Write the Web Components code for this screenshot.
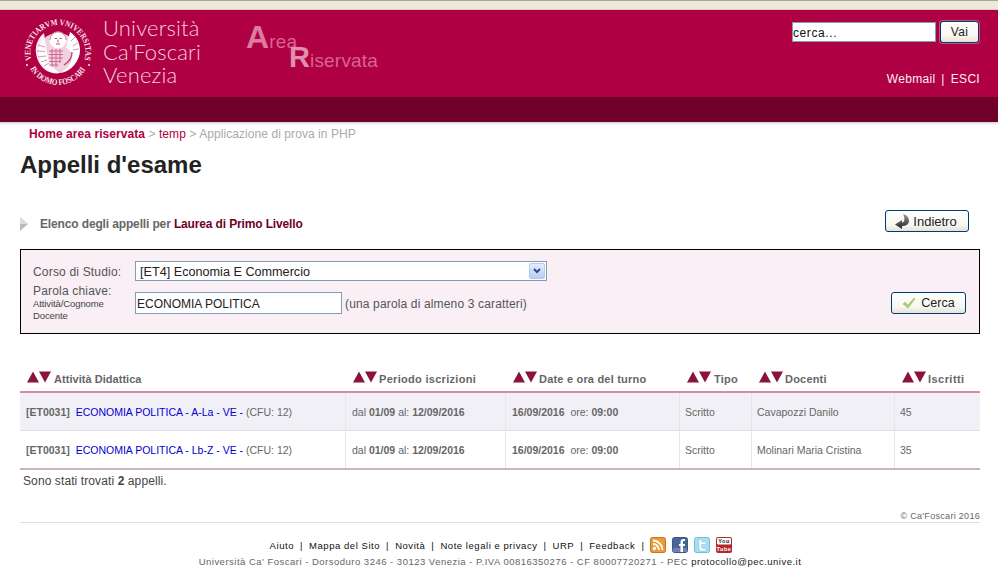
<!DOCTYPE html>
<html lang="it"><head><meta charset="utf-8"><title>Appelli d'esame</title>
<style>
html,body{margin:0;padding:0;background:#fff;font-family:"Liberation Sans",Arial,sans-serif;color:#666;overflow:hidden}
app-page{display:block;width:998px;height:578px}
</style></head><body>
<app-page>
  <cf-header></cf-header>
  <cf-main>
    <cf-crumbs></cf-crumbs>
    <cf-title>Appelli d'esame</cf-title>
    <cf-subhead></cf-subhead>
    <cf-filter></cf-filter>
    <cf-table></cf-table>
    <cf-result></cf-result>
    <cf-footer></cf-footer>
  </cf-main>
</app-page>
<script>
const FONT='"Liberation Sans",Arial,sans-serif';
function def(name,html,init){
  customElements.define(name,class extends HTMLElement{
    constructor(){super();this.attachShadow({mode:'open'}).innerHTML=typeof html==='function'?html(this):html;}
    connectedCallback(){init&&init(this);}
  });
}
const BTN=`display:inline-flex;align-items:center;justify-content:center;box-sizing:border-box;border:1px solid #003c74;border-radius:3px;background:linear-gradient(#fff,#f7f6f0 70%,#e4e2d8);color:#222;font:12px ${FONT};`;

def('app-page',`<style>:host{display:block}</style><slot></slot>`);
def('cf-main',`<style>:host{display:block;padding:0 18px 0 20px}</style><slot></slot>`);

def('cf-logo',`<style>:host{display:block;width:75px;height:75px;flex:none}svg{display:block}
text{font-family:"Liberation Serif",serif;fill:#fbe3ec;font-weight:bold}</style>
<svg width="75" height="75" viewBox="0 0 75 75">
<defs>
<path id="t2" d="M11.500 45 A27.500 27.500 0 1 1 64.500 45"/>
<path id="b" d="M10 53.500 A32 32 0 0 0 66 53.500"/>
</defs>
<text font-size="8.600"><textPath href="#t2" textLength="101" lengthAdjust="spacingAndGlyphs">VENETIARVM VNIVERSITAS</textPath></text>
<text font-size="8.600"><textPath href="#b" textLength="67" lengthAdjust="spacingAndGlyphs">IN DOMO FOSCARI</textPath></text>
<!-- winged lion -->
<circle cx="38" cy="38" r="20" fill="#fff" opacity=".82"/>
<path d="M24 18c-6 5-9 12-8 20 1 8 5 14 11 18 4 2 9 3 13 2-7-4-12-11-13-20-1-7-2-14-3-20z" fill="#fff" opacity=".92"/>
<path d="M50 17c6 4 10 10 10 18 0 11-8 20-19 23 7-5 11-11 11-16 0-5-3-8-6-9z" fill="#fff"/>
<circle cx="38" cy="25" r="8.500" fill="#fff"/>
<path d="M30 25c0-5 4-8 8-8s8 3 8 8" stroke="#c9537f" stroke-width=".8" fill="none"/>
<path d="M34.500 23.500h2.500M39.500 23.500h2.500M36 29h4M38 24.500v3" stroke="#b63a68" stroke-width=".9" fill="none"/>
<g stroke="#c04474" stroke-width="1" opacity=".75">
<path d="M29 36h14M29 39.500h14M29 43h14M29 46.500h12M29 50h9M32 34v18M36 34v18M40 34v14"/>
</g>
<path d="M18 30l7 2M17 36l8 .500M18 42l8-1M21 47l6-2M24 51l5-3M55 22l-4 4M58 28l-5 3M59 34l-6 1" stroke="#c04474" stroke-width=".8" opacity=".7"/>
<path d="M44 50c5-3 8-7 8-13" stroke="#c04474" stroke-width="1.400" fill="none"/>
<circle cx="7" cy="50" r="1" fill="#fbe3ec"/><circle cx="69" cy="50" r="1" fill="#fbe3ec"/>
</svg>`);

def('cf-header',`<style>
:host{display:block;height:125px;font-family:${FONT}}
.strip{height:10px;box-sizing:border-box;background:#ece9d8;border-top:1px solid #aca899;border-bottom:1px solid #d6d2c2}
.red{height:87px;box-sizing:border-box;background:#ae0042;display:flex;padding:5px 19px 0 20px}
.word{margin-left:8px;padding-top:1px;font:300 22px/23.500px Lato,sans-serif;color:#f6cfdd;letter-spacing:.15px}
.area{margin-left:45px;padding-top:10px;color:#d9648f;font-family:"Liberation Sans",sans-serif;font-size:19px;letter-spacing:.2px}
.area b{font-size:32px;line-height:24px;letter-spacing:0;color:#dc7aa0}
.a1,.a2{display:block;height:20px;line-height:24px;white-space:nowrap}
.a2{margin-left:43px}
.a2 b{font-size:29px;color:#e08fae}
.right{margin-left:auto;display:flex;flex-direction:column;align-items:flex-end;padding-top:6px}
.search{display:flex;gap:4px;align-items:center}
.in{box-sizing:border-box;width:144px;height:20px;background:#fff;border:1px solid #7f9db9;color:#111;font:12px/18px ${FONT};letter-spacing:.6px;padding-top:1px}
.btn{${BTN}width:39px;height:22px;letter-spacing:.4px;box-shadow:0 0 0 1px #c9517f}
.links{margin:28px -1px 0 0;display:flex;gap:6px;color:#fdeef3;font-size:12px;line-height:16px;letter-spacing:.3px;white-space:pre}
.dark{height:25px;background:#6f0029}
.shadow{height:3px;background:linear-gradient(#cfcfcf,#fff)}
</style>
<div class="strip"></div>
<div class="red">
  <cf-logo></cf-logo>
  <div class="word">Università<br>Ca'Foscari<br>Venezia</div>
  <div class="area"><span class="a1"><b>A</b>rea</span><span class="a2"><b>R</b>iservata</span></div>
  <div class="right">
    <div class="search"><div class="in">cerca...</div><div class="btn">Vai</div></div>
    <div class="links"><span>Webmail</span><span>|</span><span>ESCI</span></div>
  </div>
</div>
<div class="dark"></div><div class="shadow"></div>`);

def('cf-crumbs',`<style>:host{display:block;padding-left:9px;font:12px/16px ${FONT};color:#aaa;height:16px;padding-top:1px;letter-spacing:.07px}
b{color:#ae0042}span{color:#ae0042}</style><b>Home area riservata</b> &gt; <span>temp</span> &gt; Applicazione di prova in PHP`);

def('cf-title',`<style>:host{display:block;margin-top:8px;font:bold 24px/30px ${FONT};color:#222}</style><slot></slot>`);

def('cf-subhead',`<style>:host{display:flex;align-items:center;height:24px;margin-top:32px;font:bold 12px ${FONT};color:#666;letter-spacing:-.14px}
svg{display:block;margin-right:12px}
i{font-style:normal;color:#6f0029}
.btn{${BTN}width:84px;height:22px;margin:-6px 11px 0 auto;font-size:13px;gap:3px;padding-right:3px;font-weight:normal;letter-spacing:0}</style>
<svg width="8" height="14" viewBox="0 0 8 14"><path d="M0 0l8 7-8 7z" fill="#bbb"/><path d="M0 0l8 7H0z" fill="#ddd"/></svg>
<span>Elenco degli appelli per <i>Laurea di Primo Livello</i></span>
<div class="btn"><svg style="margin:0" width="16" height="17" viewBox="0 0 16 17"><defs><linearGradient id="g" x1="0" y1="0" x2="0" y2="1"><stop offset="0" stop-color="#999"/><stop offset="1" stop-color="#222"/></linearGradient></defs><path d="M9 1c4 1 6 4 6 7s-3 5-7 5v3L1 11.500 8 7v2.500c3 0 3-5 1-8.500z" fill="url(#g)"/></svg>Indietro</div>`);

def('cf-filter',`<style>:host{display:block;box-sizing:border-box;width:960px;height:85px;margin-top:13px;border:1px solid #000;background:#f9eff5;font:12px ${FONT};color:#555;letter-spacing:.18px}
.g{display:grid;grid-template-columns:102px auto 1fr;padding:11px 13px 0 12px;align-items:center}
.l{line-height:14px}
.l1{padding-top:2px}
small{display:block;font-size:9.500px;letter-spacing:-.1px;line-height:12px;color:#444}
.sel{box-sizing:border-box;width:412px;height:20px;background:#fff;border:1px solid #7f9db9;color:#222;font:12.650px/20px ${FONT};padding-left:4px;display:flex;justify-content:space-between;letter-spacing:0;grid-column:2/4}
.ar{width:16px;height:16px;margin:1px;border:1px solid #b5c9e8;box-sizing:border-box;border-radius:2px;background:linear-gradient(#e4edfb,#b7cdf5);display:flex;align-items:center;justify-content:center}
.in{box-sizing:border-box;width:207px;height:22px;background:#fff;border:1px solid #7f9db9;color:#222;font:12px/22px ${FONT};padding-left:1px;letter-spacing:0}
.row2{display:flex;align-items:center;grid-column:2/4;justify-content:space-between;padding-top:2px}
.lf{display:flex;align-items:center;gap:3px}
.lf span{letter-spacing:.15px;padding-top:2px}
.btn{${BTN}width:75px;height:22px;gap:5px;font-size:12.500px;letter-spacing:0;padding-top:1px}
.l2{margin-top:3px}
</style>
<div class="g">
 <div class="l l1">Corso di Studio:</div>
 <div class="sel">[ET4] Economia E Commercio<span class="ar"><svg width="8" height="6" viewBox="0 0 8 6"><path d="M1 1l3 3 3-3" stroke="#2a4d8c" stroke-width="2" fill="none"/></svg></span></div>
 <div class="l l2">Parola chiave:<small>Attività/Cognome<br>Docente</small></div>
 <div class="row2">
   <div class="lf"><div class="in">ECONOMIA POLITICA</div><span>(una parola di almeno 3 caratteri)</span></div>
   <div class="btn"><svg width="14" height="12" viewBox="0 0 14 12"><path d="M1 7l2-2 3 3 6-7 1 1-7 9z" fill="#a5d46a" stroke="#8bbf4f" stroke-width=".5"/></svg>Cerca</div>
 </div>
</div>`);

const sort=`<svg width="24" height="12" viewBox="0 0 24 12"><path d="M0 11.500L6 .500l6 11z" fill="#8c1240"/><path d="M12 .500h12l-6 11z" fill="#8c1240"/></svg>`;
const head=['Attività Didattica','Periodo iscrizioni','Date e ora del turno','Tipo','Docenti','Iscritti'];
const rows=[['A-La - VE - </a>(CFU: 12)','Cavapozzi Danilo','45'],['Lb-Z - VE - </a>(CFU: 12)','Molinari Maria Cristina','35']];
def('cf-table',`<style>:host{display:block;width:960px;margin-top:30px;font:10.500px ${FONT};color:#666}
.r{display:grid;grid-template-columns:325px 160px 174px 72px 143px 86px}
.h{height:27px;border-bottom:2px solid #d48aa8}
.h div{display:flex;align-items:center;padding-left:7px;gap:3px;font:bold 11px ${FONT};letter-spacing:.2px;height:27px}
.h svg{margin-top:-2px}
.h div:nth-child(n+2){padding-left:8px;gap:2px}
.h div:nth-child(4){gap:3px}
.h div:nth-child(1){letter-spacing:.04px}
.h div:nth-child(2){letter-spacing:.3px}
.h div:nth-child(6){letter-spacing:.45px}
.h span{padding-top:2px}
.d{height:37px;border-bottom:1px solid #e0e0e0}
.d.a{background:#f2f0f7}
.d div{display:flex;align-items:center;padding-left:6px;border-left:1px solid #e6e6e6;white-space:pre}
.d div:first-child{border-left:0}
.d div:nth-child(n+4){padding-left:5px}
.d.last{border-bottom:2px solid #c9b3bd}
a{color:#0000d0;text-decoration:none}
</style>
<div class="r h">${head.map(h=>`<div>${sort}<span>${h}</span></div>`).join('')}</div>
${rows.map((r,i)=>`<div class="r d ${i?'last':'a'}">
<div><span><b>[ET0031]</b>  <a href="#">ECONOMIA POLITICA - ${r[0]}</span></div>
<div><span>dal <b>01/09</b> al: <b>12/09/2016</b></span></div>
<div><span><b>16/09/2016</b>  ore: <b>09:00</b></span></div>
<div>Scritto</div><div>${r[1]}</div><div>${r[2]}</div></div>`).join('')}`);

def('cf-result',`<style>:host{display:block;width:960px;font:12px ${FONT};color:#444}
.a{padding-left:3px;line-height:15px;margin-top:4px;letter-spacing:.1px}
.c{text-align:right;font-size:9px;line-height:12px;margin-top:21px;color:#666;letter-spacing:.3px}
.line{height:1px;background:#ddd}</style>
<div class="a">Sono stati trovati <b>2</b> appelli.</div><div class="c">© Ca'Foscari 2016</div><div class="line"></div>`);

def('cf-footer',`<style>:host{display:block;width:960px;margin-top:13px;text-align:center;font:9.500px ${FONT};color:#666}
.l{display:flex;justify-content:center;align-items:center;height:18px;color:#111;white-space:pre;gap:6px;letter-spacing:.55px;padding-left:2px}
svg{display:block}
.i{display:flex;gap:6px}
.a{line-height:14px;margin-top:1px;white-space:pre;letter-spacing:.49px}
.a b{font-weight:normal;color:#222}
text{font:bold 5.500px ${FONT}}</style>
<div class="l"><span>Aiuto</span><span>|</span><span>Mappa del Sito</span><span>|</span><span>Novità</span><span>|</span><span>Note legali e privacy</span><span>|</span><span>URP</span><span>|</span><span>Feedback</span><span>|</span>
<div class="i">
<svg width="16" height="16" viewBox="0 0 16 16"><rect x=".5" y=".5" width="15" height="15" rx="2" fill="#ee9a38" stroke="#c4761f"/><circle cx="4.500" cy="11.500" r="1.700" fill="#fff"/><path d="M3 7a6 6 0 0 1 6 6M3 3.500a9.500 9.500 0 0 1 9.500 9.500" stroke="#fff" stroke-width="1.800" fill="none"/></svg>
<svg width="16" height="16" viewBox="0 0 16 16"><rect x=".5" y=".5" width="15" height="15" rx="2" fill="#4a6598" stroke="#3d5685"/><path d="M8.500 15V9H7V7h1.500V5c0-2 1-3 3-3H13v2h-1c-1 0-1 .5-1 1v2h2l-.3 2H11v6z" fill="#fff"/><rect x="1" y="11" width="14" height="4" fill="#fff" opacity=".2"/></svg>
<svg width="16" height="16" viewBox="0 0 16 16"><rect x=".5" y=".5" width="15" height="15" rx="2" fill="#a8def0" stroke="#6fbcdc"/><path d="M5 2.500h2.500V5H12v2.500H7.500V10c0 1 .5 1.500 1.500 1.500h3V14H8c-2 0-3-1-3-3z" fill="#fff" stroke="#6fbcdc" stroke-width=".4"/></svg>
<svg width="16" height="16" viewBox="0 0 16 16"><rect width="16" height="16" rx="2" fill="#b3282d"/><rect x="1" y="1" width="14" height="6.500" rx="1" fill="#fff"/><text x="8" y="6.300" text-anchor="middle" fill="#222">You</text><text x="8" y="13.500" text-anchor="middle" fill="#fff">Tube</text></svg>
</div></div>
<div class="a">Università Ca' Foscari - Dorsoduro 3246 - 30123 Venezia - P.IVA 00816350276 - CF 80007720271 - PEC <b>protocollo@pec.unive.it</b></div>`);
</script>
</body></html>
